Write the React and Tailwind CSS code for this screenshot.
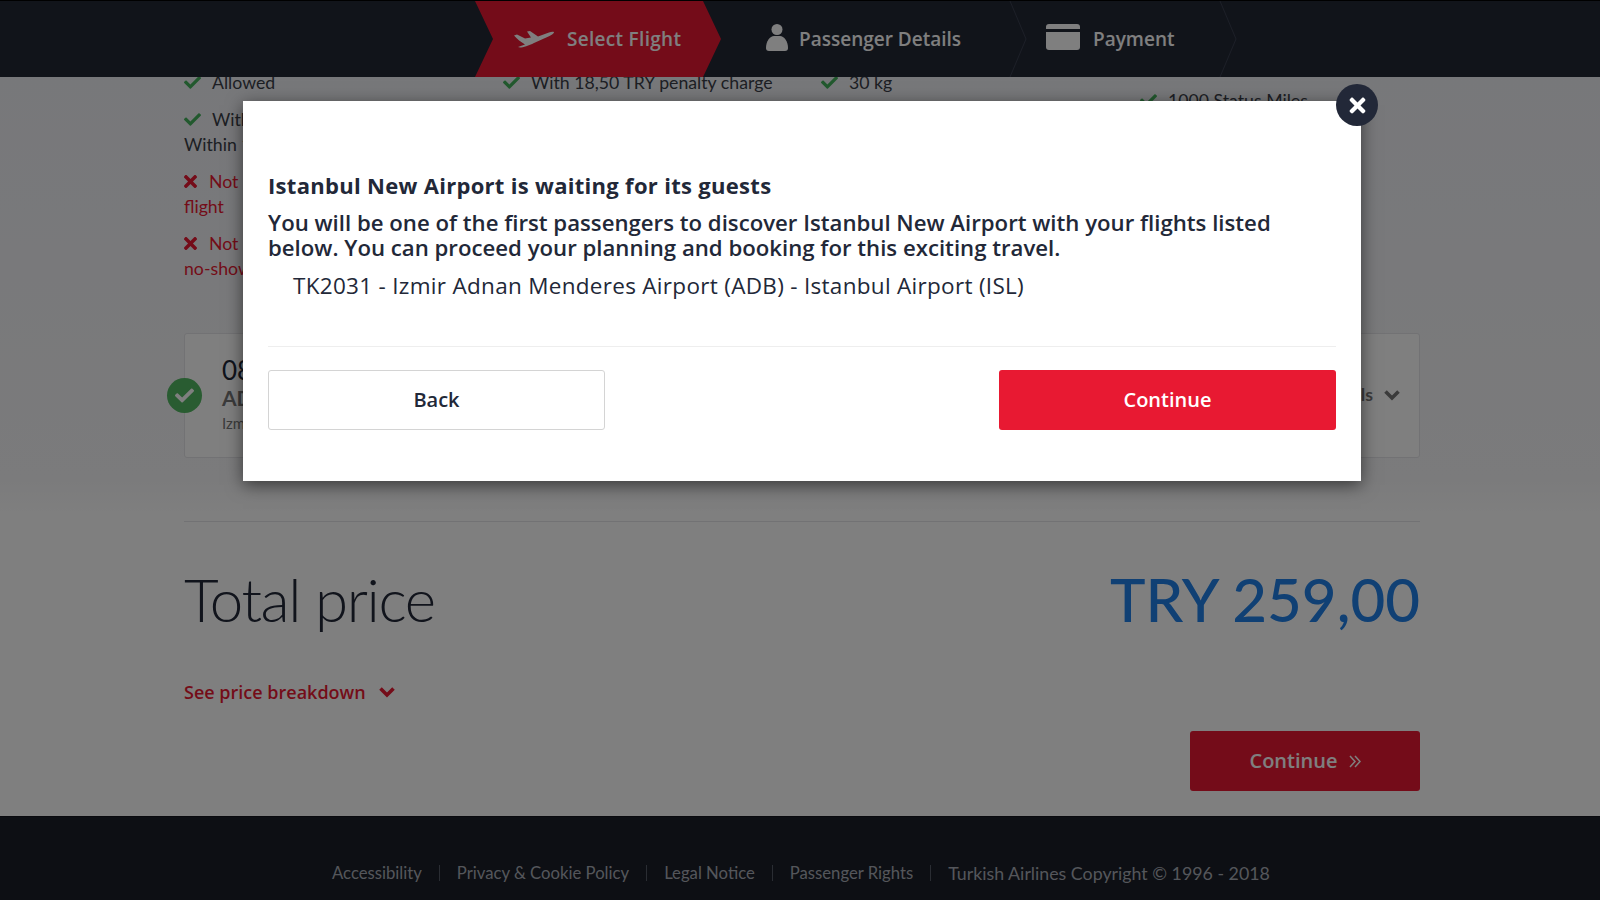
import React from "react";
import { FaCheck, FaTimes } from "react-icons/fa";

const Check = () => <FaCheck className="inline-block text-[#44b35c] text-[17px] mr-[11px] align-[-2px]" />;
const Cross = () => <FaTimes className="inline-block text-[#e81932] text-[19px] -ml-[3px] mr-[9px] align-[-3px]" />;

function Chevron({ className }) {
  return (
    <svg width="18" height="12" viewBox="0 0 18 12" fill="none" className={className}>
      <path d="M2.5 2.5L9 9L15.5 2.5" stroke="currentColor" strokeWidth="3.6" />
    </svg>
  );
}

function Divider() {
  return (
    <svg className="absolute right-0 top-0" width="18" height="76" viewBox="0 0 18 76" fill="none">
      <path d="M1 0L17 38L1 76" stroke="#3a4050" strokeWidth="1" />
    </svg>
  );
}

function Header() {
  return (
    <header className="relative z-10 h-[77px] bg-[#232835] border-t border-black flex pl-[475px] text-white text-[19px] font-semibold font-['Open_Sans',sans-serif]">
      <div className="w-[246px] h-full bg-[#e81932] [clip-path:polygon(0_0,228px_0,100%_50%,228px_100%,0_100%,18px_50%)] flex items-center pl-[39px]">
        <svg width="40" height="20" viewBox="0 0 40 20" fill="#fff" className="mr-[13px]">
          <path d="M0 6.5L3 5.5L11 9.5L17 8.5L13 2.5L16 2L24 7.5L35 3.5C37 2.8 39.5 2.6 40 3.2C40.2 4 38 5.8 35 7.2L20 14C15 16.5 9 18.5 6 18.5L4 18L11 15.5C7 13 3 10 0 6.5Z" />
        </svg>
        <span className="tracking-[0.3px]">Select Flight</span>
      </div>
      <div className="relative w-[306px] h-full flex items-center pl-[45px]">
        <svg width="22" height="27" viewBox="0 0 22 27" fill="#fff" className="mr-[11px] -mt-[4px]">
          <ellipse cx="11" cy="5.5" rx="5.5" ry="5.5" />
          <path d="M0 24C0 17 4 12 8 12H14C18 12 22 17 22 24C22 26 21 27 19 27H3C1 27 0 26 0 24Z" />
        </svg>
        <span>Passenger Details</span>
        <Divider />
      </div>
      <div className="relative w-[210px] h-full flex items-center pl-[19px]">
        <svg width="34" height="26" viewBox="0 0 34 26" className="mr-[13px] -mt-[4px]">
          <path d="M3 0H31C33 0 34 1 34 3V5H0V3C0 1 1 0 3 0Z" fill="#fff" />
          <path d="M0 8H34V23C34 25 33 26 31 26H3C1 26 0 25 0 23Z" fill="#fff" />
        </svg>
        <span>Payment</span>
        <Divider />
      </div>
    </header>
  );
}

function Behind() {
  return (
    <main className="flow-root h-[739px] bg-[linear-gradient(#eff0f5_0,#f6f6f8_400px,#ffffff_440px)] text-[#3b3f48] pl-[184px] text-[17.7px]">
      <div className="w-[1236px]">
        <div className="grid grid-cols-[319px_318px_319px_1fr] -mt-[7px] leading-[25px]">
          <div>
            <p className="h-[25px]"><Check />Allowed</p>
            <p className="mt-[12px]"><Check />With<br />Within 1</p>
            <p className="mt-[12px] text-[#e81932]"><Cross />Not<br />flight</p>
            <p className="mt-[12px] text-[#e81932]"><Cross />Not<br />no-show</p>
          </div>
          <p><Check />With 18,50 TRY penalty charge</p>
          <p><Check />30 kg</p>
          <p className="pt-[18px]"><Check />1000 Status Miles</p>
        </div>

        <section className="relative mt-[52px] h-[125px] border border-[#e4e4e8] rounded-[3px] bg-white pl-[37px] pt-[20px]">
          <div className="absolute -left-[18px] top-[44px] w-[35px] h-[35px] rounded-full bg-[#52b862] flex items-center justify-center text-white text-[19px]">
            <FaCheck />
          </div>
          <p className="text-[26px] leading-[32px] text-[#222838]">08</p>
          <p className="font-bold text-[21px] leading-[26px] text-[#777] -mt-[1px]">AD</p>
          <p className="text-[15px] leading-[20px] text-[#777] mt-[2px]">Izmir</p>
          <div className="absolute right-[18px] top-[48px] flex items-center gap-[10px] text-[#777] font-bold">
            <span>Details</span><Chevron />
          </div>
        </section>

        <hr className="mt-[63px] border-[#e4e4e8]" />

        <div className="mt-[31px] flex justify-between items-baseline">
          <span className="text-[60px] font-light leading-[92px] tracking-[-1.4px] text-[#222838]">Total price</span>
          <span className="text-[60px] leading-[92px] text-[#2080e8] font-medium">TRY 259,00</span>
        </div>

        <button className="mt-[34px] flex items-center gap-3 text-[#e81932] text-[18px] font-semibold leading-[26px] font-['Open_Sans',sans-serif]">
          See price breakdown <Chevron />
        </button>

        <div className="flex justify-end">
          <button className="w-[230px] h-[60px] mt-[26px] rounded-[3px] bg-[#e81932] text-white text-[20px] font-semibold font-['Open_Sans',sans-serif] flex items-center justify-center gap-[11px]">
            Continue
            <svg width="12" height="13" viewBox="0 0 12 13" fill="none" stroke="#fff" strokeWidth="1.5">
              <path d="M1 1L6 6.5L1 12M6 1L11 6.5L6 12" />
            </svg>
          </button>
        </div>
      </div>
    </main>
  );
}

function Footer() {
  const links = ["Accessibility", "Privacy & Cookie Policy", "Legal Notice", "Passenger Rights"];
  return (
    <footer className="h-[84px] bg-[#1a1e28] border-t border-[#12151c] flex items-start pl-[332px] pt-[43px] text-[#a9adb6] text-[16.7px] leading-[26px]">
      {links.map((l) => (
        <span key={l} className="flex items-center">
          <span>{l}</span>
          <span className="mx-[17px] h-[16px] w-px bg-[#555a66]" />
        </span>
      ))}
      <span className="text-[17.8px]">Turkish Airlines Copyright © 1996 - 2018</span>
    </footer>
  );
}

function Modal() {
  return (
    <div className="absolute left-[243px] top-[101px] w-[1118px] h-[380px] bg-white shadow-[0_4px_16px_rgba(0,0,0,0.55)] px-[25px] pt-[71px] text-[#222838] font-['Open_Sans',sans-serif]">
      <button className="absolute -right-[17px] -top-[17px] w-[42px] h-[42px] rounded-full bg-[#222838] flex items-center justify-center text-white text-[23px]">
        <FaTimes />
      </button>
      <h2 className="text-[22px] font-bold leading-[26px] tracking-[0.3px]">Istanbul New Airport is waiting for its guests</h2>
      <p className="mt-[12px] text-[22.2px] font-semibold leading-[25px]">
        You will be one of the first passengers to discover Istanbul New Airport with your flights listed
        <br />below. You can proceed your planning and booking for this exciting travel.
      </p>
      <p className="mt-[12px] pl-[25px] text-[22.5px] leading-[27px] tracking-[0.3px]">TK2031 - Izmir Adnan Menderes Airport (ADB) - Istanbul Airport (ISL)</p>
      <hr className="mt-[47px] border-[#eeeeee]" />
      <div className="mt-[23px] flex justify-between">
        <button className="w-[337px] h-[60px] rounded-[3px] border border-[#d4d4d4] bg-white text-[20px] font-semibold">Back</button>
        <button className="w-[337px] h-[60px] rounded-[3px] bg-[#e81932] text-white text-[20px] font-semibold">Continue</button>
      </div>
    </div>
  );
}

export default function App() {
  return (
    <div className="relative w-[1600px] h-[900px] overflow-hidden font-['Lato','Liberation_Sans',sans-serif]">
      <Header />
      <Behind />
      <Footer />
      <div className="absolute inset-0 z-20 bg-black/50" />
      <div className="absolute inset-0 z-30">
        <Modal />
      </div>
    </div>
  );
}
